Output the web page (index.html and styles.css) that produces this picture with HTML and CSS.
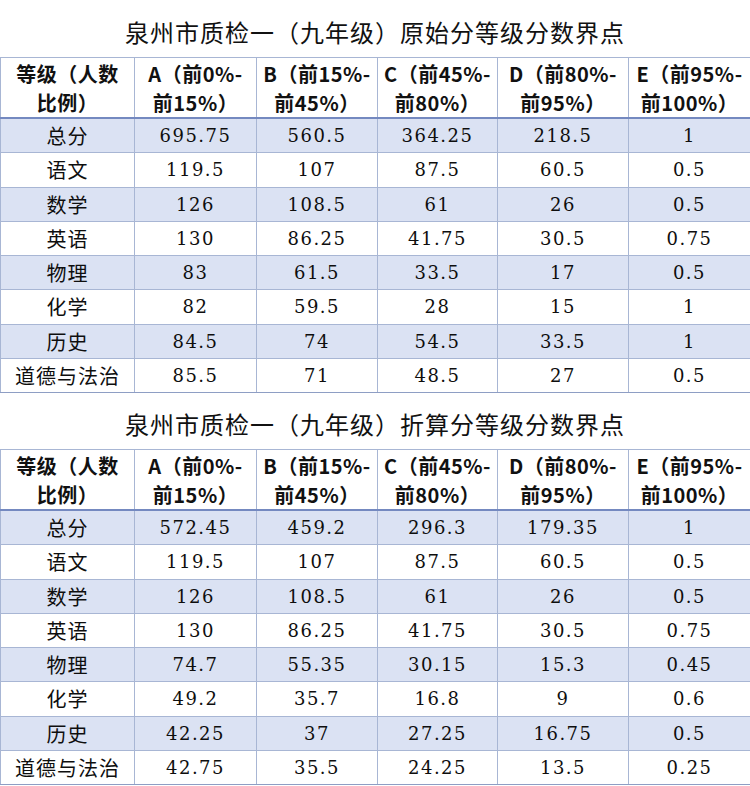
FILE: index.html
```html
<!DOCTYPE html>
<html lang="zh">
<head>
<meta charset="utf-8">
<title>泉州市质检一等级分数界点</title>
<link rel="stylesheet" href="styles.css">
</head>
<body>
<div class="page">
  <h2 class="title">泉州市质检一（九年级）原始分等级分数界点</h2>
  <table class="grade">
    <colgroup>
      <col class="c0"><col class="c1"><col class="c2"><col class="c3"><col class="c4"><col class="c5">
    </colgroup>
    <thead>
      <tr>
        <th>等级（人数<br>比例）</th>
        <th>A（前0%-<br>前15%）</th>
        <th>B（前15%-<br>前45%）</th>
        <th>C（前45%-<br>前80%）</th>
        <th>D（前80%-<br>前95%）</th>
        <th>E（前95%-<br>前100%）</th>
      </tr>
    </thead>
    <tbody>
      <tr class="alt"><td class="sub">总分</td><td>695.75</td><td>560.5</td><td>364.25</td><td>218.5</td><td>1</td></tr>
      <tr><td class="sub">语文</td><td>119.5</td><td>107</td><td>87.5</td><td>60.5</td><td>0.5</td></tr>
      <tr class="alt"><td class="sub">数学</td><td>126</td><td>108.5</td><td>61</td><td>26</td><td>0.5</td></tr>
      <tr><td class="sub">英语</td><td>130</td><td>86.25</td><td>41.75</td><td>30.5</td><td>0.75</td></tr>
      <tr class="alt"><td class="sub">物理</td><td>83</td><td>61.5</td><td>33.5</td><td>17</td><td>0.5</td></tr>
      <tr><td class="sub">化学</td><td>82</td><td>59.5</td><td>28</td><td>15</td><td>1</td></tr>
      <tr class="alt"><td class="sub">历史</td><td>84.5</td><td>74</td><td>54.5</td><td>33.5</td><td>1</td></tr>
      <tr><td class="sub">道德与法治</td><td>85.5</td><td>71</td><td>48.5</td><td>27</td><td>0.5</td></tr>
    </tbody>
  </table>
  <h2 class="title second">泉州市质检一（九年级）折算分等级分数界点</h2>
  <table class="grade">
    <colgroup>
      <col class="c0"><col class="c1"><col class="c2"><col class="c3"><col class="c4"><col class="c5">
    </colgroup>
    <thead>
      <tr>
        <th>等级（人数<br>比例）</th>
        <th>A（前0%-<br>前15%）</th>
        <th>B（前15%-<br>前45%）</th>
        <th>C（前45%-<br>前80%）</th>
        <th>D（前80%-<br>前95%）</th>
        <th>E（前95%-<br>前100%）</th>
      </tr>
    </thead>
    <tbody>
      <tr class="alt"><td class="sub">总分</td><td>572.45</td><td>459.2</td><td>296.3</td><td>179.35</td><td>1</td></tr>
      <tr><td class="sub">语文</td><td>119.5</td><td>107</td><td>87.5</td><td>60.5</td><td>0.5</td></tr>
      <tr class="alt"><td class="sub">数学</td><td>126</td><td>108.5</td><td>61</td><td>26</td><td>0.5</td></tr>
      <tr><td class="sub">英语</td><td>130</td><td>86.25</td><td>41.75</td><td>30.5</td><td>0.75</td></tr>
      <tr class="alt"><td class="sub">物理</td><td>74.7</td><td>55.35</td><td>30.15</td><td>15.3</td><td>0.45</td></tr>
      <tr><td class="sub">化学</td><td>49.2</td><td>35.7</td><td>16.8</td><td>9</td><td>0.6</td></tr>
      <tr class="alt"><td class="sub">历史</td><td>42.25</td><td>37</td><td>27.25</td><td>16.75</td><td>0.5</td></tr>
      <tr><td class="sub">道德与法治</td><td>42.75</td><td>35.5</td><td>24.25</td><td>13.5</td><td>0.25</td></tr>
    </tbody>
  </table>
</div>
</body>
</html>
```

FILE: styles.css
```css
html, body {
  margin: 0;
  padding: 0;
  background: #ffffff;
}

.page {
  width: 750px;
  font-family: "Noto Sans CJK SC", "Noto Sans", sans-serif;
  color: #111111;
}

.title {
  margin: 0;
  height: 57px;
  display: flex;
  align-items: center;
  justify-content: center;
  font-size: 24px;
  font-weight: 400;
  letter-spacing: 1px;
  padding-top: 6px;
  box-sizing: border-box;
}

.title.second {
  height: 56px;
  padding-top: 4px;
}

.grade {
  width: 750px;
  border-collapse: collapse;
  table-layout: fixed;
}

.c0 { width: 134px; }
.c1 { width: 122px; }
.c2 { width: 121px; }
.c3 { width: 120px; }
.c4 { width: 131px; }
.c5 { width: 122px; }

.grade th,
.grade td {
  border: 1px solid #a8b6d4;
  padding: 0;
  text-align: center;
}

.grade th {
  height: 59px;
  font-size: 20px;
  font-weight: 700;
  line-height: 29px;
  color: #111111;
  border-bottom: 2px solid #7489c0;
  background: #ffffff;
  letter-spacing: 0.5px;
}

.grade td {
  height: 33.25px;
  font-family: "DejaVu Serif", "Liberation Serif", serif;
  font-size: 18px;
  letter-spacing: 1.5px;
  color: #0e0e0e;
}

.grade td.sub {
  font-family: "Noto Sans CJK SC", sans-serif;
  font-size: 20px;
  letter-spacing: 1px;
}

.grade tr.alt td {
  background: #dbe2f3;
}

.grade tr:last-child td {
  border-bottom-color: #8e9ec4;
}
```
